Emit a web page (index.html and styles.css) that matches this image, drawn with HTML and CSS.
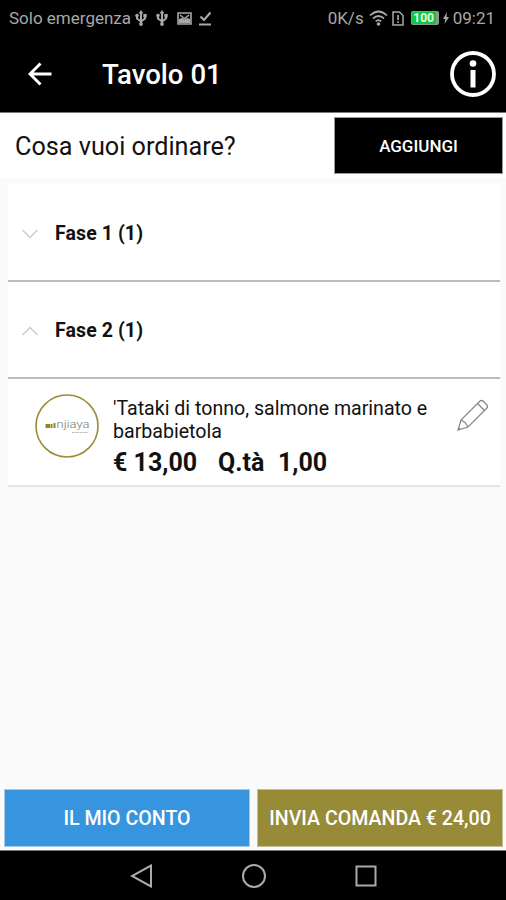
FILE: index.html
```
<!DOCTYPE html>
<html lang="it">
<head>
  <meta charset="utf-8">
  <title>Tavolo 01</title>
  <link rel="stylesheet" href="styles.css">
</head>
<body>
  <div class="status-bar">
    <span class="carrier">Solo emergenza</span>
    <svg class="usb" width="12" height="18" viewBox="0 0 12 18"><path d="M6 3v13M2 6v3.500l4 3 4-3V7" fill="none" stroke="currentColor" stroke-width="2"/><path d="M6 1l2.500 3.500h-5z"/><circle cx="2" cy="6.500" r="1.800"/><path d="M8.300 5h3.400v3.400H8.300z"/><circle cx="6" cy="15" r="1.900"/></svg>
    <svg class="usb" width="12" height="18" viewBox="0 0 12 18"><path d="M6 3v13M2 6v3.500l4 3 4-3V7" fill="none" stroke="currentColor" stroke-width="2"/><path d="M6 1l2.500 3.500h-5z"/><circle cx="2" cy="6.500" r="1.800"/><path d="M8.300 5h3.400v3.400H8.300z"/><circle cx="6" cy="15" r="1.900"/></svg>
    <svg class="picture" width="15" height="13" viewBox="0 0 15 13"><path d="M1 1h13v11H1z" fill="none" stroke="currentColor" stroke-width="1.600"/><path d="M2 11V7l3-1 2.500 1.500L10 6l3 1v4z"/><path d="M3 3l4.500 3.500L12 3" fill="none" stroke="currentColor" stroke-width="1.500"/></svg>
    <svg class="done" width="14" height="15" viewBox="0 0 14 15"><path d="M2.500 5.500l3.500 3.500L12.500 1.500M1 13.500h12" fill="none" stroke="currentColor" stroke-width="2.200"/></svg>
    <span class="speed">0K/s</span>
    <svg class="wifi" width="19" height="16" viewBox="0 0 19 16"><path d="M1 5.500q8.500-8 17 0M4 8.500q5.500-5 11 0M6.700 11.300q2.800-2.500 5.600 0" fill="none" stroke="currentColor" stroke-width="1.700"/><circle cx="9.500" cy="14" r="1.800"/></svg>
    <svg class="sim" width="12" height="15" viewBox="0 0 12 15"><path d="M1 1h6.500L11 4.500V14H1z" fill="none" stroke="currentColor" stroke-width="1.500"/><path d="M5.200 4h1.700v5H5.200zM5.200 10.300h1.700V12H5.200z"/></svg>
    <span class="battery">100</span>
    <svg class="bolt" width="6" height="12" viewBox="0 0 6 12"><path d="M4 0L0 7h2.300L1.500 12 6 5H3.500z"/></svg>
    <span class="clock">09:21</span>
  </div>

  <header class="app-bar">
    <svg class="back" width="24" height="24" viewBox="0 0 24 24"><path d="M23.500 12H2.500M12.500 1.500L2 12l10.500 10.500" fill="none" stroke="#fff" stroke-width="2.900"/></svg>
    <h1>Tavolo 01</h1>
    <svg class="info" width="46" height="46" viewBox="0 0 46 46"><circle cx="23" cy="23" r="21" fill="none" stroke="#fff" stroke-width="3.800"/><circle cx="23" cy="12.500" r="3.300" fill="#fff"/><path d="M23 19v17.500" stroke="#fff" stroke-width="5"/></svg>
  </header>

  <div class="prompt">
    <span class="question">Cosa vuoi ordinare?</span>
    <button class="btn add">AGGIUNGI</button>
  </div>

  <main class="order">
    <div class="phase">
      <svg width="18" height="10" viewBox="0 0 18 10"><path d="M1.500 1L9 8.500 16.500 1"/></svg>
      <span>Fase 1 (1)</span>
    </div>
    <div class="phase">
      <svg width="18" height="10" viewBox="0 0 18 10"><path d="M1.500 9L9 1.500 16.500 9"/></svg>
      <span>Fase 2 (1)</span>
    </div>
    <div class="dish">
      <svg class="logo" width="64" height="64" viewBox="0 0 64 64">
        <circle cx="32" cy="32" r="31" fill="#fff" stroke="#9a8b35" stroke-width="1.600"/>
        <path d="M10.500 30h4.500v4h-4.500zM15.500 30h2v4h-2zM18.500 29h2v5h-2z" fill="#998615"/>
        <text class="logo-name" x="21.500" y="34" textLength="33" lengthAdjust="spacingAndGlyphs">njiaya</text>
        <path d="M37 38.500h16" stroke="#bbb" stroke-dasharray="2 .6"/>
      </svg>
      <div class="details">
        <p class="name">'Tataki di tonno, salmone marinato e barbabietola</p>
        <p class="price"><span class="amount">€ 13,00</span><span class="label">Q.tà</span><span>1,00</span></p>
      </div>
      <svg class="edit" width="32" height="32" viewBox="0 0 32 32"><path d="M1 31l3-10L22.500 2.500q2-2 4 0l3 3q2 2 0 4L11 28zM20.500 4.500l7 7M4 21l4 2.500 3 4.500M1.500 28.500l2 2"/></svg>
    </div>
  </main>

  <footer class="actions">
    <button class="btn bill">IL MIO CONTO</button>
    <button class="btn send">INVIA COMANDA € 24,00</button>
  </footer>

  <nav class="nav-bar">
    <svg width="24" height="24" viewBox="0 0 24 24"><path d="M21 1.500v21L2 12z"/></svg>
    <svg width="24" height="24" viewBox="0 0 24 24"><circle cx="12" cy="12" r="11"/></svg>
    <svg width="24" height="24" viewBox="0 0 24 24"><path d="M2.500 2.500h19v19h-19z"/></svg>
  </nav>
</body>
</html>
```
FILE: styles.css
```
* {
  box-sizing: border-box;
}

body {
  margin: 0;
  height: 900px;
  display: flex;
  flex-direction: column;
  background: #fafafa;
  color: #111;
  font-family: Roboto, sans-serif;
  overflow: hidden;
}

svg {
  display: block;
  flex: none;
}

.status-bar {
  height: 36px;
  padding: 0 11px 0 9px;
  display: flex;
  align-items: center;
  background: #000;
  color: #a8a8a8;
  fill: currentColor;
  font-size: 17px;
  white-space: nowrap;
}

.carrier {
  width: 126px;
}

.usb {
  margin-right: 9px;
}

.picture {
  margin-right: 6px;
}

.speed {
  margin-left: auto;
}

.wifi {
  margin-left: 5px;
}

.sim {
  margin: 0 7px 0 4px;
}

.battery {
  width: 28px;
  height: 14px;
  border: 1px solid #8b9b8b;
  border-right-width: 3px;
  border-radius: 2px;
  background: #10c540;
  color: #e4ffe9;
  font-size: 12px;
  font-weight: 700;
  line-height: 12px;
  text-align: center;
}

.bolt {
  margin: 0 4px;
}

.app-bar {
  height: 77px;
  padding: 0 10px 0 28px;
  display: flex;
  align-items: center;
  background: #000;
  color: #fff;
  border-bottom: 1px solid #777;
}

.app-bar h1 {
  margin: 0 auto 0 50px;
  font-size: 27.6px;
  font-weight: 500;
}

.prompt {
  height: 65px;
  padding: 4px 3px 4px 15px;
  display: flex;
  align-items: center;
  justify-content: space-between;
  background: #fff;
}

.question {
  padding-top: 2px;
  font-size: 25.2px;
}

.btn {
  height: 57px;
  padding: 0;
  border: 1px solid #999;
  border-radius: 0;
  color: #fff;
  font-family: inherit;
  font-weight: 500;
  white-space: nowrap;
}

.add {
  width: 169px;
  background: #000;
  font-size: 17px;
}

.order {
  margin: 6px 6px 0 8px;
  background: #fff;
}

.phase {
  height: 97px;
  padding: 2px 13px 0;
  display: flex;
  align-items: center;
  gap: 16px;
  border-bottom: 2px solid #bbb;
  font-size: 19.5px;
  font-weight: 700;
  letter-spacing: 0.1px;
}

.phase:first-child {
  height: 98px;
  padding-top: 3px;
}

.phase svg {
  fill: none;
  stroke: #ccc;
  stroke-width: 1.5;
}

.dish {
  height: 108px;
  padding: 15px 11px 0 27px;
  display: flex;
  align-items: flex-start;
  border-bottom: 2px solid #e6e6e6;
}

.logo-name {
  fill: #777;
  font-size: 11px;
  font-weight: 300;
}

.details {
  width: 330px;
  margin: 3px auto 0 14px;
}

.details p {
  margin: 0;
}

.name {
  font-size: 19.6px;
  line-height: 23px;
}

.price {
  padding-top: 1px;
  display: flex;
  font-size: 25px;
  font-weight: 700;
  line-height: 38px;
}

.amount {
  width: 105px;
}

.label {
  width: 60px;
}

.edit {
  margin-top: 5px;
  fill: none;
  stroke: #888;
  stroke-width: 1.3;
}

.actions {
  margin-top: auto;
  padding: 0 3px 3px 4px;
  display: flex;
  gap: 7px;
}

.actions .btn {
  flex: 1;
  height: 58px;
  font-size: 19.6px;
}

.actions .bill {
  background: #3795e0;
  border-color: #a9c9e2;
}

.actions .send {
  background: #988b38;
  border-color: #c2bd9a;
}

.nav-bar {
  height: 50px;
  padding-left: 1px;
  display: flex;
  justify-content: center;
  align-items: center;
  gap: 88px;
  background: #000;
  border-top: 1px solid #777;
  fill: none;
  stroke: #aaa;
  stroke-width: 2;
}
```
